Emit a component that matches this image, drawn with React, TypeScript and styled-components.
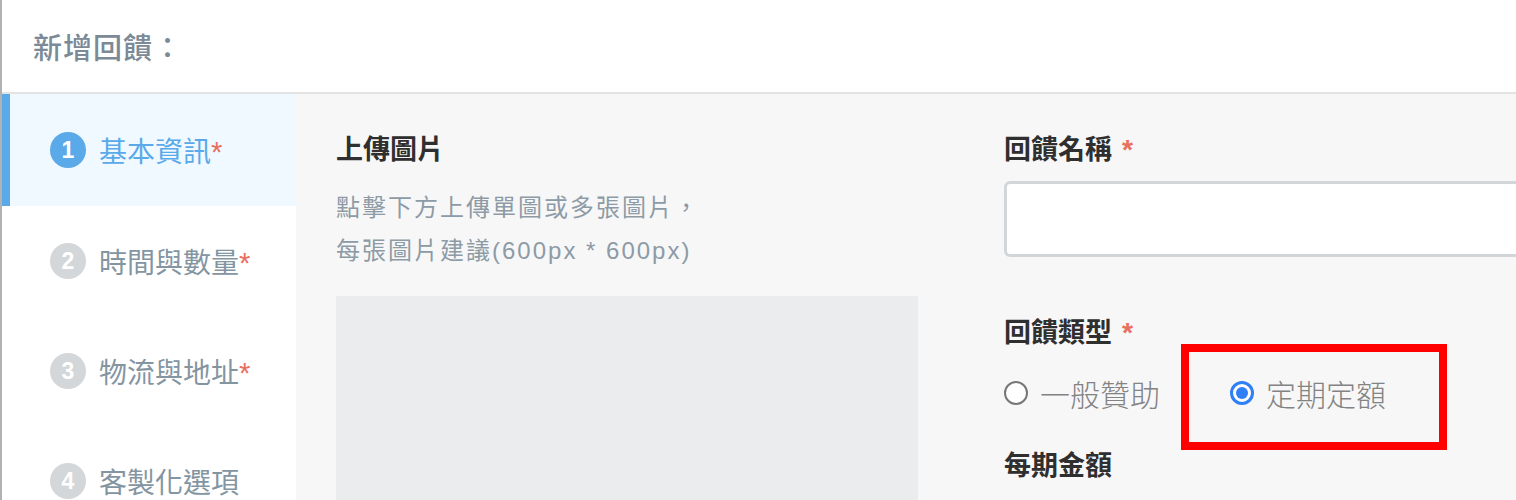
import React from 'react';
import styled, { createGlobalStyle } from 'styled-components';

const GlobalStyle = createGlobalStyle`
  html, body {
    margin: 0;
    padding: 0;
    background: #ffffff;
    font-family: "Noto Sans CJK TC", "Noto Sans", sans-serif;
    overflow: hidden;
  }
`;

const Page = styled.div`
  width: 1516px;
  height: 500px;
  display: flex;
  flex-direction: column;
  border-left: 2px solid #b2b2b2;
  box-sizing: border-box;
  overflow: hidden;
`;

const Header = styled.div`
  height: 92px;
  flex-shrink: 0;
  display: flex;
  align-items: center;
  padding-left: 31px;
  border-bottom: 2px solid #e3e3e3;
  background: #fff;
`;

const Title = styled.h1`
  margin: 0;
  font-size: 29px;
  font-weight: 500;
  color: #7b8a96;
  letter-spacing: 1px;
`;

const Body = styled.div`
  flex: 1;
  display: flex;
  min-height: 0;
`;

const Sidebar = styled.nav`
  width: 294px;
  flex-shrink: 0;
  background: #fff;
  display: flex;
  flex-direction: column;
`;

const StepItem = styled.div<{ $active?: boolean }>`
  height: 110px;
  flex-shrink: 0;
  display: flex;
  align-items: center;
  gap: 13px;
  padding-left: 40px;
  border-left: 8px solid ${(p) => (p.$active ? '#5aa9e9' : 'transparent')};
  background: ${(p) => (p.$active ? '#f0f9ff' : '#fff')};
  &:first-child {
    height: 112px;
  }
`;

const StepNum = styled.span<{ $active?: boolean }>`
  width: 36px;
  height: 36px;
  border-radius: 50%;
  background: ${(p) => (p.$active ? '#5aa9e9' : '#d4d7da')};
  color: #fff;
  font-family: "Liberation Sans", Arial, sans-serif;
  font-size: 23px;
  font-weight: 700;
  display: flex;
  align-items: center;
  justify-content: center;
  flex-shrink: 0;
`;

const StepLabel = styled.span<{ $active?: boolean }>`
  font-size: 28px;
  color: ${(p) => (p.$active ? '#5aa9e9' : '#8495a2')};
`;

const Star = styled.span<{ $gap?: number }>`
  color: #e8705f;
  font-family: "Liberation Sans", Arial, sans-serif;
  font-size: 1.05em;
  margin-left: ${(p) => p.$gap ?? 0}px;
`;

const Main = styled.main`
  flex: 1;
  background: #f7f7f7;
  display: flex;
  gap: 86px;
  padding: 36px 0 0 40px;
  overflow: hidden;
`;

const Column = styled.section<{ $width?: number }>`
  display: flex;
  flex-direction: column;
  width: ${(p) => (p.$width ? `${p.$width}px` : 'auto')};
  flex: ${(p) => (p.$width ? 'none' : '1')};
  min-width: 0;
`;

const FieldLabel = styled.div<{ $top?: number }>`
  font-size: 27px;
  font-weight: 700;
  color: #2f2f2f;
  line-height: 36px;
  margin-top: ${(p) => p.$top ?? 0}px;
`;

const Hint = styled.p`
  margin: 20px 0 0;
  font-family: "Liberation Sans", "Noto Sans CJK TC", sans-serif;
  font-size: 24px;
  line-height: 43px;
  color: #8d9ba6;
  letter-spacing: 2px;
`;

const UploadBox = styled.div`
  margin-top: 24px;
  height: 260px;
  background: #ebecee;
`;

const TextInput = styled.input`
  margin-top: 14px;
  height: 76px;
  box-sizing: border-box;
  border: 3px solid #d3d6d9;
  border-radius: 6px;
  background: #fff;
  width: calc(100% + 40px);
  outline: none;
`;

const RadioRow = styled.div`
  display: flex;
  align-items: center;
  height: 86px;
`;

const RadioOption = styled.label`
  display: flex;
  align-items: center;
  gap: 12px;
  font-size: 30px;
  font-weight: 300;
  color: #838383;
  position: relative;
  & + & {
    margin-left: 70px;
  }
`;

const RadioDot = styled.span<{ $checked?: boolean }>`
  width: 24px;
  height: 24px;
  border-radius: 50%;
  box-sizing: border-box;
  border: ${(p) => (p.$checked ? '3px solid #2f7ff6' : '2px solid #777')};
  background: #fff;
  display: flex;
  align-items: center;
  justify-content: center;
  &::after {
    content: '';
    display: ${(p) => (p.$checked ? 'block' : 'none')};
    width: 12px;
    height: 12px;
    border-radius: 50%;
    background: #2f7ff6;
  }
`;

const HighlightFrame = styled.span`
  position: absolute;
  left: -49px;
  top: 50%;
  margin-top: -49px;
  width: 266px;
  height: 106px;
  border: 8px solid #ff0000;
  box-sizing: border-box;
  pointer-events: none;
`;

const steps = [
  { n: 1, label: '基本資訊', required: true },
  { n: 2, label: '時間與數量', required: true },
  { n: 3, label: '物流與地址', required: true },
  { n: 4, label: '客製化選項', required: false },
];

const App: React.FC = () => (
  <>
    <GlobalStyle />
    <Page>
      <Header>
        <Title>新增回饋：</Title>
      </Header>
      <Body>
        <Sidebar>
          {steps.map((s) => (
            <StepItem key={s.n} $active={s.n === 1}>
              <StepNum $active={s.n === 1}>{s.n}</StepNum>
              <StepLabel $active={s.n === 1}>
                {s.label}
                {s.required && <Star>*</Star>}
              </StepLabel>
            </StepItem>
          ))}
        </Sidebar>
        <Main>
          <Column $width={582}>
            <FieldLabel>上傳圖片</FieldLabel>
            <Hint>
              點擊下方上傳單圖或多張圖片，
              <br />
              每張圖片建議(600px * 600px)
            </Hint>
            <UploadBox />
          </Column>
          <Column>
            <FieldLabel>
              回饋名稱<Star $gap={10}>*</Star>
            </FieldLabel>
            <TextInput type='text' />
            <FieldLabel $top={56}>
              回饋類型<Star $gap={10}>*</Star>
            </FieldLabel>
            <RadioRow>
              <RadioOption>
                <RadioDot />
                一般贊助
              </RadioOption>
              <RadioOption>
                <HighlightFrame />
                <RadioDot $checked />
                定期定額
              </RadioOption>
            </RadioRow>
            <FieldLabel $top={10}>每期金額</FieldLabel>
          </Column>
        </Main>
      </Body>
    </Page>
  </>
);

export default App;
